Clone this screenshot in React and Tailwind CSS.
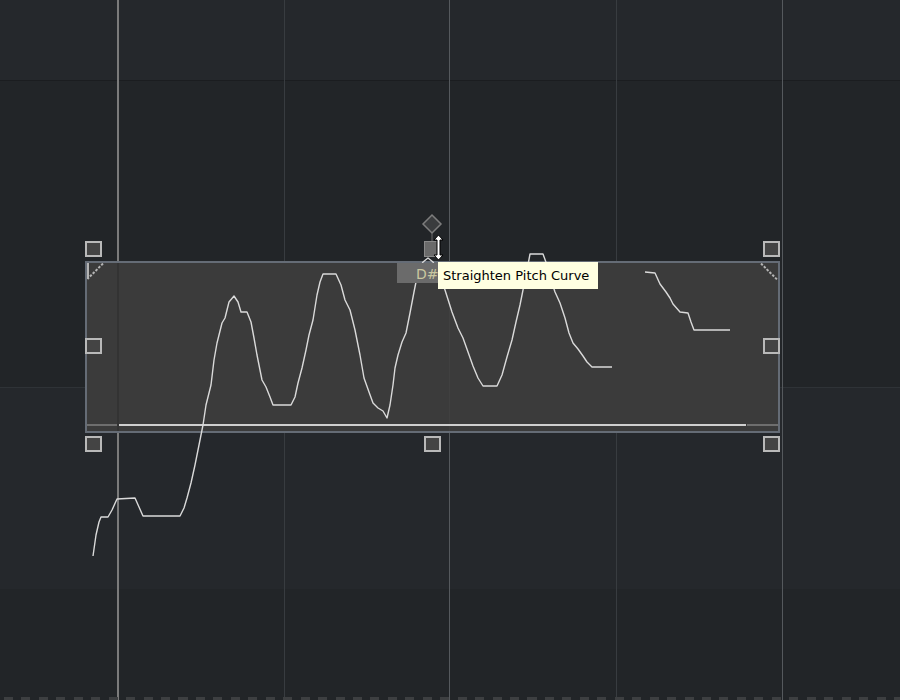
import React from 'react';

const curveA =
  '93,556 96,535 99,522 101,517 108,517 112,510 117,499 135,498 139,507 143,516 180,516 184,508 187,498 191,483 195,465 199,445 203,425 206,405 208,397 211,385 214,360 217,343 222,323 225,318 229,302 234,296 238,302 241,312 247,312 251,322 254,338 257,355 260,370 262,380 266,387 270,397 273,405 291,405 295,397 298,383 302,368 306,350 309,335 313,320 317,295 320,282 323,274 336,274 341,285 345,300 350,310 355,330 360,355 364,378 369,392 373,403 378,408 383,411 387,418 390,405 393,385 395,368 398,355 402,342 406,333 410,313 414,292 418,272 423,262 428,258 433,262 438,272 445,290 452,312 458,328 463,338 468,352 473,366 478,378 483,386 497,386 502,375 507,357 512,340 516,322 520,305 524,285 527,270 530,254 543,254 547,265 551,280 555,292 560,303 565,318 569,333 573,343 578,349 583,356 587,362 592,367 612,367';

const curveB = '645,272 655,273 660,284 666,292 670,298 673,304 680,312 688,313 691,322 694,330 730,330';

// resize handles around the selected region
const handles = [
  { x: 85, y: 241 },
  { x: 763, y: 241 },
  { x: 85, y: 338 },
  { x: 763, y: 338 },
  { x: 85, y: 436 },
  { x: 424, y: 436 },
  { x: 763, y: 436 }
];

const gridLines = [
  { x: 117, w: 2, color: '#7b7b7b' },
  { x: 284, w: 1, color: '#383c40' },
  { x: 449, w: 1, color: '#55595d' },
  { x: 616, w: 1, color: '#383c40' },
  { x: 782, w: 1, color: '#55595d' }
];

const Handle = ({ x, y }) => (
  <div
    className="absolute w-[17px] h-[16px] border-2 border-[#b9b9b9] bg-[#444444]"
    style={{ left: x, top: y }}
  />
);

export default function App() {
  return (
    <div className="relative w-[900px] h-[700px] overflow-hidden bg-[#222528] font-['Liberation_Sans',sans-serif]">
      {/* Pitch lane bands */}
      <div className="flex flex-col h-full">
        <div className="h-[81px] bg-[#25282c] border-b border-[#1b1d20]" />
        <div className="h-[307px] bg-[#222528] border-b border-[#2f3337]" />
        <div className="h-[201px] bg-[#25282c]" />
        <div className="flex-1 bg-[#222528]" />
      </div>

      {/* Bar lines */}
      {gridLines.map((g) => (
        <div
          key={g.x}
          className="absolute top-0 h-full"
          style={{ left: g.x, width: g.w, background: g.color }}
        />
      ))}

      {/* Bottom dashed ruler */}
      <div className="absolute left-[4px] right-0 bottom-0 h-[3px] bg-[repeating-linear-gradient(90deg,#3d3f41_0px,#3d3f41_9px,transparent_9px,transparent_17.45px)]" />

      {/* Selected pitch region */}
      <div className="absolute left-[85px] top-[261px] w-[695px] h-[172px] bg-[#3b3b3b] border-2 border-[#656c76]">
        <div className="absolute left-[30px] top-0 h-full w-[2px] bg-[#333333]" />
        <div className="absolute left-[362px] top-0 h-full w-px bg-[#404040]" />
        <div className="absolute left-0 top-[161px] w-[30px] h-[2px] bg-[#6e6e6e]" />
        <div className="absolute left-[32px] top-[161px] w-[627px] h-[2px] bg-[#cfcfcf]" />
        <div className="absolute left-[660px] top-[161px] w-[31px] h-[2px] bg-[#6e6e6e]" />
        <svg className="absolute left-0 top-0" width="18" height="18">
          <line x1="16" y1="0.5" x2="0.5" y2="16" stroke="#b4b4b4" strokeWidth="2" strokeDasharray="2.5 1.5" />
          <line x1="1" y1="0" x2="1" y2="16" stroke="#b4b4b4" strokeWidth="2" />
        </svg>
        <svg className="absolute right-0 top-0" width="18" height="18">
          <line x1="1" y1="0.5" x2="17" y2="16.5" stroke="#b4b4b4" strokeWidth="2" strokeDasharray="2.5 1.5" />
        </svg>
      </div>

      {handles.map((h) => (
        <Handle key={`${h.x}-${h.y}`} x={h.x} y={h.y} />
      ))}

      {/* Pitch curve */}
      <svg className="absolute left-0 top-0" width="900" height="700">
        <polyline points={curveA} fill="none" stroke="#dadada" strokeWidth="1.4" strokeLinejoin="round" />
        <polyline points={curveB} fill="none" stroke="#dadada" strokeWidth="1.4" strokeLinejoin="round" />
      </svg>

      {/* Straighten handle: diamond, knob and cursor */}
      <svg className="absolute left-[420px] top-[211px]" width="30" height="31">
        <polygon points="12,4 21,13 12,22 3,13" fill="#3a3c3e" stroke="#7d7d7d" strokeWidth="1.5" />
        <line x1="12" y1="22" x2="12" y2="30" stroke="#6a6a6a" strokeWidth="1" />
      </svg>
      <div className="absolute left-[424px] top-[241px] w-[14px] h-[16px] bg-[#6a6a6a] border border-[#8a8a8a]" />

      {/* Note label */}
      <div className="absolute left-[397px] top-[263px] w-[44px] h-[20px] bg-[#6b6b6b] flex items-center pl-[19px] pt-[2px] text-[14px] text-[#c9c7a0] font-['DejaVu_Sans',sans-serif]">
        D#
      </div>

      {/* Up/down cursor */}
      <svg className="absolute left-[432px] top-[234px]" width="13" height="30">
        <path
          d="M6.5 1 L11 6 L8 6 L8 21 L11 21 L6.5 26 L2 21 L5 21 L5 6 L2 6 Z"
          fill="#ffffff"
          stroke="#000000"
          strokeWidth="1"
          strokeLinejoin="miter"
        />
      </svg>

      {/* Tooltip */}
      <div className="absolute left-[438px] top-[262px] h-[27px] w-[160px] bg-[#ffffe1] flex items-center pl-[5px] pt-[1px] text-[13px] text-black whitespace-nowrap font-['DejaVu_Sans',sans-serif]">
        Straighten Pitch Curve
      </div>
    </div>
  );
}
